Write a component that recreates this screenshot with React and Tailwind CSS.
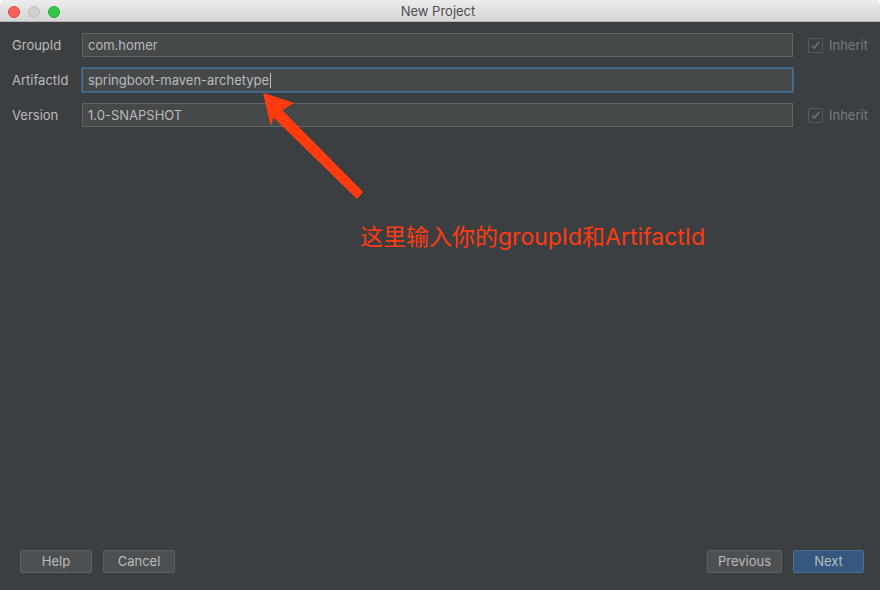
import React from "react";

const font = { fontFamily: 'Inter, "Noto Sans CJK SC", sans-serif' };

function Check() {
  return (
    <span className="w-[15px] h-[15px] border border-[#5a5d5f] bg-[#3c3f41] rounded-[2px] flex items-center justify-center">
      <svg width="11" height="11" viewBox="0 0 11 11" fill="none">
        <path d="M2 5.5 L4.5 8 L9 2" stroke="#6d6f71" strokeWidth="1.6" />
      </svg>
    </span>
  );
}

function Row({ label, value, focused, inherit, cursor }) {
  return (
    <div className="flex items-center h-[24px]">
      <div className="w-[70px] text-[13px] text-[#bbbbbb] pt-px">{label}</div>
      <div
        className={
          "flex-1 h-[24px] flex items-center px-[5px] pt-px text-[13px] text-[#bbbbbb] bg-[#45494a] " +
          (focused
            ? "border border-[#4a6f96] ring-1 ring-[#3d5f82]"
            : "border border-[#646464]")
        }
      >
        {value}
        {cursor && <span className="w-px h-[15px] bg-[#bbbbbb] ml-px" />}
      </div>
      <div className="w-[87px] flex items-center pl-[15px] gap-[6px]">
        {inherit && (
          <>
            <Check />
            <span className="text-[13px] text-[#777a7c] pt-px">Inherit</span>
          </>
        )}
      </div>
    </div>
  );
}

function Btn({ children, primary, w }) {
  return (
    <button
      className={
        "h-[23px] rounded-[2px] text-[13px] text-[#bbbbbb] border flex items-center justify-center pt-px " +
        w +
        (primary
          ? " bg-[#365880] border-[#4b6e93]"
          : " bg-[#4c5052] border-[#5e6264]")
      }
    >
      {children}
    </button>
  );
}

export default function App() {
  return (
    <div className="w-[880px] h-[590px] flex flex-col relative overflow-hidden" style={font}>
      <div className="h-[22px] pt-[2px] flex items-center relative bg-gradient-to-b from-[#ececec] to-[#d6d6d6] border-b border-[#b4b4b4] rounded-t-[5px]">
        <div className="flex items-center gap-[8px] pl-[8px]">
          <span className="w-[12px] h-[12px] rounded-full bg-[#fc5f57] border border-[#df4744]" />
          <span className="w-[12px] h-[12px] rounded-full bg-[#d0d0d0] border border-[#bcbcbc]" />
          <span className="w-[12px] h-[12px] rounded-full bg-[#33c748] border border-[#27aa35]" />
        </div>
        <div className="flex-1 text-center text-[13px] text-[#4d4d4d] pr-[64px]">New Project</div>
      </div>

      <div className="flex-1 bg-[#3c3f41] flex flex-col">
        <div className="flex flex-col gap-[11px] pl-[12px] pt-[11px]">
          <Row label="GroupId" value="com.homer" inherit />
          <Row label="ArtifactId" value="springboot-maven-archetype" focused cursor />
          <Row label="Version" value="1.0-SNAPSHOT" inherit />
        </div>

        <div className="flex-1" />

        <div className="flex items-center pl-[20px] pr-[16px] pb-[17px]">
          <div className="flex gap-[11px]">
            <Btn w="w-[72px]">Help</Btn>
            <Btn w="w-[72px]">Cancel</Btn>
          </div>
          <div className="flex-1" />
          <div className="flex gap-[11px]">
            <Btn w="w-[75px]">Previous</Btn>
            <Btn w="w-[71px]" primary>Next</Btn>
          </div>
        </div>
      </div>

      <svg className="absolute left-0 top-0 pointer-events-none" width="880" height="590">
        <path d="M264 94 L292 103 L281 110 L362 192 L357 198 L273 116 L271 124 Z" fill="#ff3b0f" strokeLinejoin="round" stroke="#ff3b0f" strokeWidth="1.5" />
      </svg>
      <div className="absolute left-[360px] top-[222px] text-[23px] leading-[30px] text-[#ff3b12]">
        这里输入你的groupId和ArtifactId
      </div>
    </div>
  );
}
